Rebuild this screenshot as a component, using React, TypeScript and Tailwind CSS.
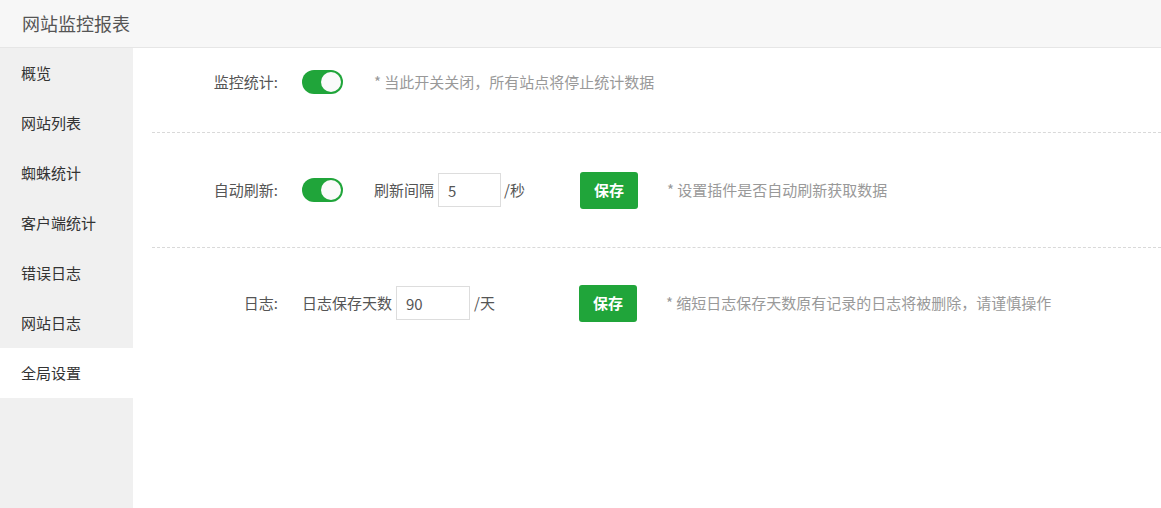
import React from "react";

const font = { fontFamily: '"Noto Sans CJK SC", "Noto Sans", sans-serif' };

function Toggle() {
  return (
    <div className="relative w-[41px] h-[24px] rounded-full bg-[#20a53a] shrink-0">
      <div className="absolute right-[2px] top-[2px] w-[20px] h-[20px] rounded-full bg-[#fafafa]" />
    </div>
  );
}

function Label({ children }: { children: React.ReactNode }) {
  return <div className="w-[126px] text-right text-[#555] shrink-0">{children}</div>;
}

export default function App() {
  const menu = ["概览", "网站列表", "蜘蛛统计", "客户端统计", "错误日志", "网站日志", "全局设置"];
  return (
    <div className="w-[1161px] h-[508px] flex flex-col bg-white text-[15px] overflow-hidden" style={font}>
      <div className="h-[48px] shrink-0 bg-[#f7f7f7] border-b border-[#e6e6e6] flex items-center pl-[22px] text-[18px] text-[#555]">
        网站监控报表
      </div>
      <div className="flex flex-1">
        <div className="w-[133px] shrink-0 bg-[#f0f0f0] flex flex-col">
          {menu.map((m, i) => (
            <div
              key={m}
              className={
                "h-[50px] flex items-center pl-[21px] text-[#333] " +
                (i === menu.length - 1 ? "bg-white" : "")
              }
            >
              {m}
            </div>
          ))}
        </div>
        <div className="flex-1 pl-[19px] flex flex-col">
          <div className="h-[85px] flex items-center pb-[16px] border-b border-dashed border-[#d9d9d9]">
            <Label>监控统计:</Label>
            <div className="ml-[24px]">
              <Toggle />
            </div>
            <div className="ml-[31px] text-[#999]">* 当此开关关闭，所有站点将停止统计数据</div>
          </div>
          <div className="h-[115px] flex items-center border-b border-dashed border-[#d9d9d9]">
            <Label>自动刷新:</Label>
            <div className="ml-[24px]">
              <Toggle />
            </div>
            <div className="ml-[31px] text-[#555]">刷新间隔</div>
            <input
              defaultValue="5"
              className="ml-[4px] w-[63px] h-[34px] border border-[#ddd] pl-[9px] text-[#555] outline-none"
              style={font}
            />
            <div className="ml-[3px] text-[#555]">/秒</div>
            <button className="ml-[55px] w-[58px] h-[37px] rounded-[3px] bg-[#20a53a] text-white font-bold">
              保存
            </button>
            <div className="ml-[29px] text-[#999]">* 设置插件是否自动刷新获取数据</div>
          </div>
          <div className="h-[110px] flex items-center">
            <Label>日志:</Label>
            <div className="ml-[24px] text-[#555]">日志保存天数</div>
            <input
              defaultValue="90"
              className="ml-[4px] w-[74px] h-[34px] border border-[#ddd] pl-[9px] text-[#555] outline-none"
              style={font}
            />
            <div className="ml-[4px] text-[#555]">/天</div>
            <button className="ml-[84px] w-[58px] h-[37px] rounded-[3px] bg-[#20a53a] text-white font-bold">
              保存
            </button>
            <div className="ml-[29px] text-[#999]">* 缩短日志保存天数原有记录的日志将被删除，请谨慎操作</div>
          </div>
        </div>
      </div>
    </div>
  );
}
